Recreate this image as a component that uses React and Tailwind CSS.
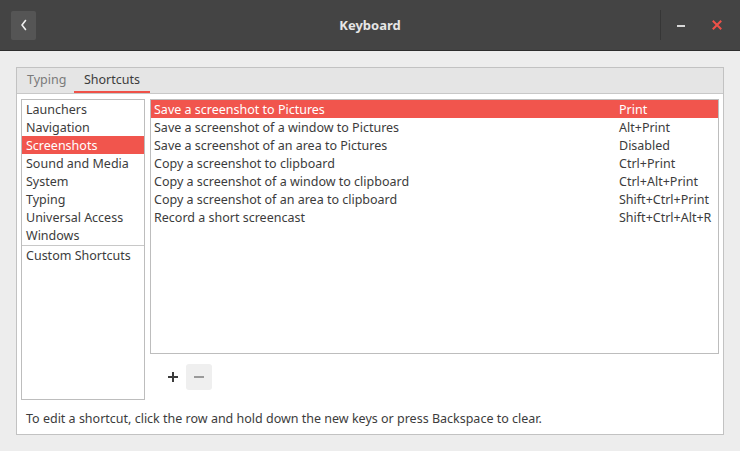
import React from "react";

const cats = ["Launchers", "Navigation", "Screenshots", "Sound and Media", "System", "Typing", "Universal Access", "Windows"];
const rows = [
  ["Save a screenshot to Pictures", "Print"],
  ["Save a screenshot of a window to Pictures", "Alt+Print"],
  ["Save a screenshot of an area to Pictures", "Disabled"],
  ["Copy a screenshot to clipboard", "Ctrl+Print"],
  ["Copy a screenshot of a window to clipboard", "Ctrl+Alt+Print"],
  ["Copy a screenshot of an area to clipboard", "Shift+Ctrl+Print"],
  ["Record a short screencast", "Shift+Ctrl+Alt+R"],
];

export default function App() {
  return (
    <div className="w-[740px] h-[451px] bg-[#ededed] flex flex-col text-[12.5px] text-[#3c3c3c] overflow-hidden" style={{ fontFamily: '"Noto Sans", "Open Sans", sans-serif' }}>
      <div className="h-[51px] bg-[#444444] border-b border-[#2d2d2d] grid grid-cols-[1fr_auto_1fr] items-center shrink-0">
        <div className="flex items-center pl-[11px]">
          <div className="w-[25px] h-[29px] bg-[#555555] rounded-[2px] flex items-center justify-center">
            <svg width="10" height="14" viewBox="0 0 10 14" fill="none">
              <path d="M6.5 2.5 L3 7 L6.5 11.5" stroke="#f0f0f0" strokeWidth="1.6" strokeLinecap="round" strokeLinejoin="round" />
            </svg>
          </div>
        </div>
        <div className="text-[#e6e6e6] font-bold text-[13px] text-center pt-[2px]">Keyboard</div>
        <div className="flex items-center justify-end h-full">
          <div className="w-px h-[30px] bg-[#363636] mr-[13px]"></div>
          <div className="w-[14px] h-[14px] flex items-center justify-center mr-[22px]">
            <div className="w-[8px] h-[2px] bg-[#d8d8d8] mt-[2px]"></div>
          </div>
          <div className="w-[14px] h-[14px] flex items-center justify-center mr-[16px]">
            <svg width="10" height="10" viewBox="0 0 10 10">
              <path d="M1.5 1.5 L8.5 8.5 M8.5 1.5 L1.5 8.5" stroke="#ef5148" strokeWidth="2" strokeLinecap="square" />
            </svg>
          </div>
        </div>
      </div>

      <div className="pt-[16px] px-[16px]">
        <div className="w-[708px] h-[368px] border border-[#c2c2c2] bg-white flex flex-col">
          <div className="h-[26px] bg-[#e5e5e5] border-b border-[#c8c8c8] flex items-end pl-[10px] shrink-0">
            <div className="w-[47px] h-full flex items-center text-[#7a7a7a] pb-[1px]">Typing</div>
            <div className="w-[76px] h-full flex items-center justify-center text-[#3c3c3c] border-b-2 border-[#ef5148] pt-[1px]">Shortcuts</div>
          </div>
          <div className="flex-1 flex flex-col pt-[5px] px-[4px]">
            <div className="flex gap-[5px]">
              <div className="w-[124px] h-[301px] border border-[#bdbdbd] bg-white">
                {cats.map((c) => (
                  <div key={c} className={`h-[18px] leading-[20px] pl-[4px] ${c === "Screenshots" ? "bg-[#f1554d] text-white" : ""}`}>{c}</div>
                ))}
                <div className="border-t border-[#c8c8c8] mt-[1px] h-[19px] leading-[20px] pl-[4px]">Custom Shortcuts</div>
              </div>
              <div className="flex-1 flex flex-col">
                <div className="h-[255px] border border-[#bdbdbd] bg-white">
                  {rows.map(([a, b], i) => (
                    <div key={a} className={`h-[18px] leading-[20px] flex pl-[3px] ${i === 0 ? "bg-[#f1554d] text-white" : ""}`}>
                      <div className="flex-1 whitespace-nowrap">{a}</div>
                      <div className="w-[99px] whitespace-nowrap">{b}</div>
                    </div>
                  ))}
                </div>
                <div className="flex mt-[10px] ml-[10px]">
                  <div className="w-[26px] h-[26px] flex items-center justify-center">
                    <svg width="12" height="12" viewBox="0 0 12 12">
                      <path d="M6 1 V11 M1 6 H11" stroke="#3c3c3c" strokeWidth="2" />
                    </svg>
                  </div>
                  <div className="w-[26px] h-[26px] bg-[#efefef] rounded-[3px] flex items-center justify-center">
                    <svg width="12" height="12" viewBox="0 0 12 12">
                      <path d="M1 6 H11" stroke="#9a9a9a" strokeWidth="2" />
                    </svg>
                  </div>
                </div>
              </div>
            </div>
            <div className="pl-[5px] mt-[10px] whitespace-nowrap">To edit a shortcut, click the row and hold down the new keys or press Backspace to clear.</div>
          </div>
        </div>
      </div>
    </div>
  );
}
